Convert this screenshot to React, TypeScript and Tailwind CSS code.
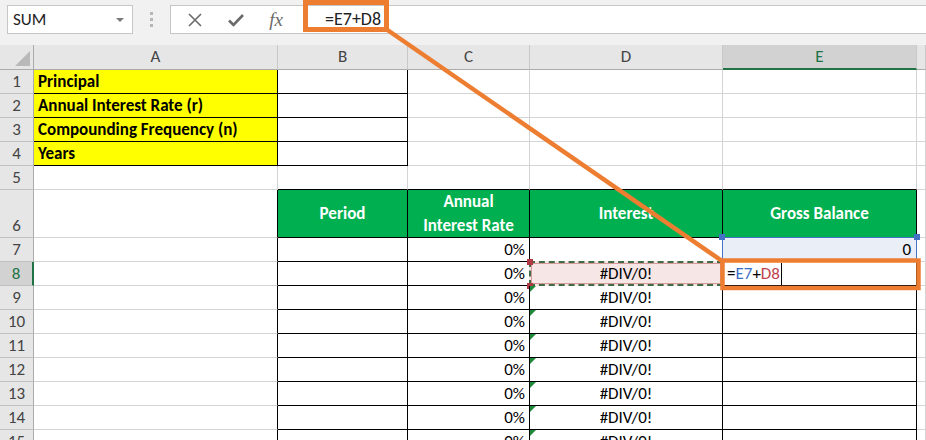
import React from "react";

const COLS = ["A", "B", "C", "D", "E", "F"];
const ROWS = [1, 2, 3, 4, 5, 6, 7, 8, 9, 10, 11, 12, 13, 14, 15];

const labels: Record<number, string> = {
  1: "Principal",
  2: "Annual Interest Rate (r)",
  3: "Compounding Frequency (n)",
  4: "Years",
};

// cells that carry a black border all round
function boxed(r: number, c: number) {
  if (r >= 1 && r <= 4 && (c === 0 || c === 1)) return true;
  if (r >= 6 && c >= 1 && c <= 4) return true;
  return false;
}

function Toolbar() {
  return (
    <div className="h-[45px] bg-[#f1f1f1] flex items-start pt-[5px] pl-[7px]">
      <div className="w-[126px] h-[29px] bg-white border border-[#c6c6c6] flex items-center justify-between pl-[5px] pr-[8px]">
        <span className="text-[17px] text-[#222]">SUM</span>
        <span className="w-0 h-0 border-l-[4px] border-r-[4px] border-t-[4px] border-l-transparent border-r-transparent border-t-[#7a7a7a]" />
      </div>
      <div className="w-[37px] h-[29px] flex flex-col items-center justify-center gap-[3px]">
        <span className="w-[3px] h-[3px] bg-[#b5b5b5]" />
        <span className="w-[3px] h-[3px] bg-[#b5b5b5]" />
        <span className="w-[3px] h-[3px] bg-[#b5b5b5]" />
      </div>
      <div className="flex-1 h-[29px] bg-white border border-[#c6c6c6] border-r-0 flex items-center">
        <div className="w-[134px] flex items-center justify-around pl-[4px] pr-[10px]">
          <svg width="16" height="16" viewBox="0 0 16 16">
            <path d="M2 2 L14 14 M14 2 L2 14" stroke="#6a6a6a" strokeWidth="1.6" fill="none" />
          </svg>
          <svg width="18" height="16" viewBox="0 0 18 16">
            <path d="M2 8.5 L6.5 13 L16 3" stroke="#6a6a6a" strokeWidth="2.6" fill="none" />
          </svg>
          <span className="text-[19px] italic text-[#6a6a6a] font-['Liberation_Serif',serif] leading-none">
            fx
          </span>
        </div>
        <span className="ml-[20px] text-[18px] text-[#222]">=E7+D8</span>
      </div>
    </div>
  );
}

function ColumnHeader() {
  return (
    <>
      <div className="h-[25px] bg-[#e6e6e6] border-r border-b border-[#ababab] relative">
        <span className="absolute right-[3px] bottom-[3px] w-0 h-0 [border-bottom:15px_solid_#b9b9b9] [border-left:15px_solid_transparent]" />
      </div>
      {COLS.map((c) =>
        c === "E" ? (
          <div
            key={c}
            className="h-[25px] bg-[#d2d2d2] border-r border-[#c8c8c8] border-b-2 border-b-[#217346] flex items-center justify-center text-[17px] text-[#217346]"
          >
            {c}
          </div>
        ) : (
          <div
            key={c}
            className="h-[25px] bg-[#e6e6e6] border-r border-b border-r-[#c8c8c8] border-b-[#ababab] flex items-center justify-center text-[17px] text-[#444]"
          >
            {c === "F" ? "" : c}
          </div>
        )
      )}
    </>
  );
}

function RowHeader({ r }: { r: number }) {
  const h = r === 6 ? "h-[48px]" : "h-[24px]";
  if (r === 8) {
    return (
      <div className={`${h} bg-[#d2d2d2] border-r-2 border-r-[#217346] border-b border-b-[#c0c0c0] flex items-end justify-center text-[17px] text-[#217346] leading-[23px]`}>
        {r}
      </div>
    );
  }
  return (
    <div className={`${h} bg-[#e6e6e6] border-r border-b border-r-[#ababab] border-b-[#c0c0c0] flex items-end justify-center text-[17px] text-[#444] leading-[23px]`}>
      {r}
    </div>
  );
}

function Cell({ r, c }: { r: number; c: number }) {
  const h = r === 6 ? "h-[48px]" : "h-[24px]";
  const right = boxed(r, c) || boxed(r, c + 1) ? "border-r-black" : "border-r-[#d4d4d4]";
  const bottom = boxed(r, c) || boxed(r + 1, c) ? "border-b-black" : "border-b-[#d4d4d4]";
  const base = `${h} border-r border-b ${right} ${bottom} relative flex items-center text-[17px] text-black`;

  if (r <= 4 && c === 0) {
    return <div className={`${base} bg-[#ffff00] font-bold pl-[4px]`}>{labels[r]}</div>;
  }
  if (r === 6 && c >= 1 && c <= 4) {
    const text = ["Period", "Annual\nInterest Rate", "Interest", "Gross Balance"][c - 1];
    return (
      <div className={`${base} bg-[#00b050] font-bold text-white justify-center text-center whitespace-pre-line leading-[24px]`}>
        {text}
      </div>
    );
  }
  if (r >= 7 && c === 2) {
    return <div className={`${base} justify-end pr-[4px]`}>0%</div>;
  }
  if (r === 8 && c === 3) {
    return (
      <div className={`${base} justify-center`}>
        <div className="absolute inset-[-1px] bg-[#f6e6e6] border-2 border-dashed border-[#3f6b45]" />
        <div className="absolute inset-[1px] border border-[#d79a9a]" />
        <span className="relative">#DIV/0!</span>
        <span className="absolute left-[-3px] top-[-3px] w-[6px] h-[6px] bg-[#b03a44]" />
        <span className="absolute left-[-3px] bottom-[-4px] w-[6px] h-[6px] bg-[#b03a44]" />
      </div>
    );
  }
  if (r >= 9 && c === 3) {
    return (
      <div className={`${base} justify-center`}>
        <span className="absolute left-0 top-0 w-0 h-0 border-t-[6px] border-r-[6px] border-t-[#1e8c3a] border-r-transparent" />
        #DIV/0!
      </div>
    );
  }
  if (r === 7 && c === 4) {
    return (
      <div className={`${base} justify-end pr-[5px] bg-[#e9eef7]`}>
        <div className="absolute left-[-1px] top-[-1px] right-[-1px] bottom-[-1px] border border-[#4472c4]" />
        <span className="relative">0</span>
        <span className="absolute left-[-4px] top-[-4px] w-[6px] h-[6px] bg-[#4472c4]" />
        <span className="absolute right-[-4px] top-[-4px] w-[6px] h-[6px] bg-[#4472c4]" />
      </div>
    );
  }
  if (r === 8 && c === 4) {
    return (
      <div className={`${base} pl-[4px] bg-white`}>
        <span>=</span>
        <span className="text-[#3b6fc7]">E7</span>
        <span>+</span>
        <span className="text-[#c0424c]">D8</span>
        <span className="ml-[1px] w-[1px] h-[22px] bg-black" />
      </div>
    );
  }
  return <div className={base} />;
}

export default function App() {
  return (
    <div className="w-[926px] h-[440px] overflow-hidden relative bg-white font-['Carlito','Calibri','Lato','Liberation_Sans',sans-serif]">
      <Toolbar />
      <div className="grid grid-cols-[34px_244px_130px_122px_193px_194px_1fr]">
        <ColumnHeader />
        {ROWS.map((r) => (
          <React.Fragment key={r}>
            <RowHeader r={r} />
            {COLS.map((_, c) => (
              <Cell key={c} r={r} c={c} />
            ))}
          </React.Fragment>
        ))}
      </div>

      {/* callout drawn on top of the sheet */}
      <svg className="absolute left-0 top-0 pointer-events-none" width="926" height="440">
        <rect x="305.5" y="2.5" width="81" height="27" fill="none" stroke="#ed7d31" strokeWidth="5" />
        <line x1="386" y1="29" x2="722" y2="261" stroke="#ed7d31" strokeWidth="4.5" />
        <rect x="722.5" y="260.5" width="196" height="27.5" fill="none" stroke="#ed7d31" strokeWidth="4.5" />
      </svg>
    </div>
  );
}
